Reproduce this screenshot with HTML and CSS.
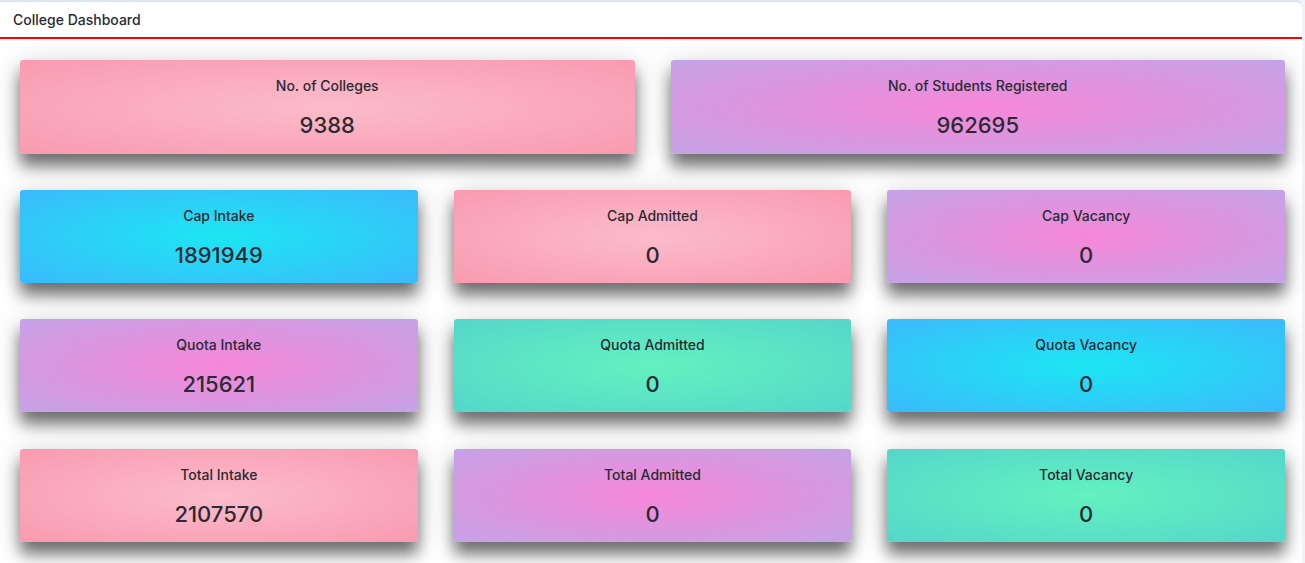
FILE: index.html
```html
<!DOCTYPE html>
<html lang="en">
<head>
<meta charset="utf-8">
<title>College Dashboard</title>
<link rel="stylesheet" href="styles.css">
</head>
<body>
<div class="panel">
  <div class="panel-header">College Dashboard</div>
  <div class="panel-body">
    <div class="row row-2 row-top">
      <div class="stat pink"><div class="label">No. of Colleges</div><div class="value">9388</div></div>
      <div class="stat purple"><div class="label">No. of Students Registered</div><div class="value">962695</div></div>
    </div>
    <div class="row row-3">
      <div class="stat blue"><div class="label">Cap Intake</div><div class="value">1891949</div></div>
      <div class="stat pink"><div class="label">Cap Admitted</div><div class="value">0</div></div>
      <div class="stat purple"><div class="label">Cap Vacancy</div><div class="value">0</div></div>
    </div>
    <div class="row row-3">
      <div class="stat purple"><div class="label">Quota Intake</div><div class="value">215621</div></div>
      <div class="stat teal"><div class="label">Quota Admitted</div><div class="value">0</div></div>
      <div class="stat blue"><div class="label">Quota Vacancy</div><div class="value">0</div></div>
    </div>
    <div class="row row-3 row-last">
      <div class="stat pink"><div class="label">Total Intake</div><div class="value">2107570</div></div>
      <div class="stat purple"><div class="label">Total Admitted</div><div class="value">0</div></div>
      <div class="stat teal"><div class="label">Total Vacancy</div><div class="value">0</div></div>
    </div>
  </div>
</div>
</body>
</html>
```
FILE: styles.css
```css
html, body {
  margin: 0;
  padding: 0;
}
body {
  background: #f3f4fa;
  font-family: "Inter", "Noto Sans", "Liberation Sans", sans-serif;
  color: #2a2a33;
}
.panel {
  margin-top: 2px;
  width: 1302px;
  background: #ffffff;
  border-top-right-radius: 6px;
  box-shadow: 0 -2px 0 #dfe4f5;
  min-height: 561px;
}
.panel-header {
  height: 35px;
  line-height: 36px;
  padding-left: 13px;
  font-size: 14px;
  font-weight: 500;
  border-bottom: 2px solid #ff0000;
}
.panel-body {
  padding: 21px 17px 20px 20px;
  display: flex;
  flex-direction: column;
  gap: 36px;
}
.row {
  display: grid;
  gap: 36px;
}
.row-2 { grid-template-columns: 1fr 1fr; }
.row-3 { grid-template-columns: 1fr 1fr 1fr; }
.row-last { margin-top: 1px; }
.stat {
  height: 93px;
  box-sizing: border-box;
  padding-top: 16px;
  border-radius: 3px;
  text-align: center;
  box-shadow: 0 12px 16px rgba(0, 0, 0, 0.55), 0 0 30px rgba(0, 0, 0, 0.12);
}
.row-top .stat { height: 94px; }
.label {
  font-size: 14px;
  line-height: 20px;
  font-weight: 500;
}
.value {
  margin-top: 14px;
  font-size: 22px;
  line-height: 30px;
  font-weight: 500;
}
.pink { background: radial-gradient(ellipse at center, #fbbcca 0%, #f99ab1 100%); }
.purple { background: radial-gradient(ellipse at center, #f687d8 0%, #c4a3e6 100%); }
.blue { background: radial-gradient(ellipse at center, #1de6f3 0%, #3bbafb 100%); }
.teal { background: radial-gradient(ellipse at center, #63f2bf 0%, #55d6ca 100%); }
```
